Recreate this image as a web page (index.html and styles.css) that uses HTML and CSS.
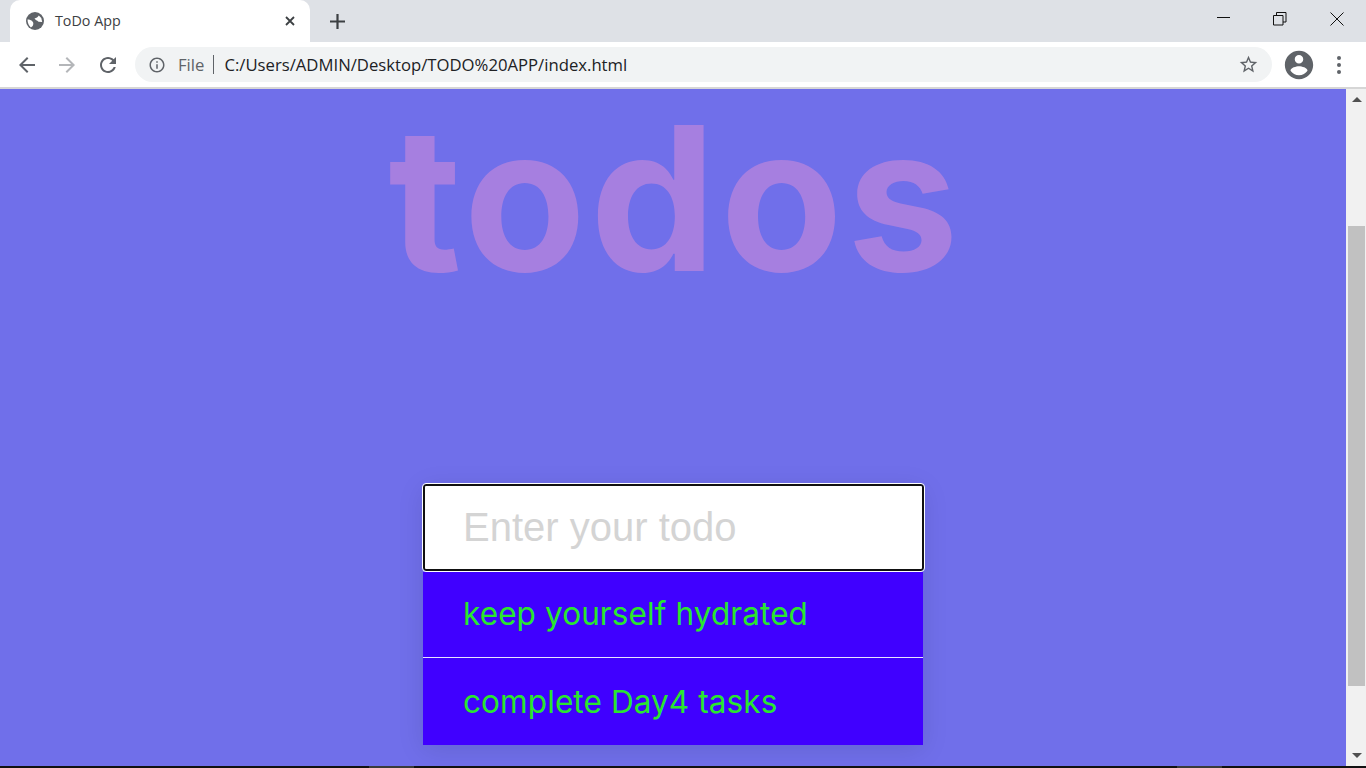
FILE: index.html
```html
<!DOCTYPE html>
<html>
  <head>
    <title>ToDo App</title>
    <meta name="viewport" content="width=device-width, initial-scale=1.0" />
    <link rel="stylesheet" href="styles.css">
  </head>
  <body>
    <div class="tabstrip">
      <div class="tab">
        <svg class="favicon" viewBox="0 0 18 18">
          <circle cx="9" cy="9" r="9" fill="#5f6368"/>
          <path fill="#fff" d="M1.500 7.500c2 0 3.800.6 5 2 1.200 1.300 1 3 .2 4.500l-1.800 1.500C3 14 1.500 11 1.500 7.500zM8.500 6.500c1.800-.3 3.500-1.500 4.300-3l2.500 2.500.9 4-3.700-.2c-1.500-1.500-3-1.800-4-3.300z"/>
        </svg>
        <span class="tab-title">ToDo App</span>
        <svg class="tab-close" viewBox="0 0 10 10"><path d="M1 1l8 8M9 1l-8 8"/></svg>
      </div>
      <svg class="new-tab" viewBox="0 0 15 15"><path d="M7.500 0v15M0 7.500h15"/></svg>
      <div class="window-controls">
        <svg viewBox="0 0 14 14"><path d="M0 5.500h13"/></svg>
        <svg class="restore" viewBox="0 0 14 14"><path d="M.5 3.500h9.500v9.500H.5zM3.500 3.500V.5h9.500v9.500H10"/></svg>
        <svg viewBox="0 0 14 14"><path d="M.5.5l13 13M13.500.5l-13 13"/></svg>
      </div>
    </div>

    <div class="toolbar">
      <svg class="nav-icon" viewBox="0 0 24 24"><path d="M20 11H7.830l5.590-5.590L12 4l-8 8 8 8 1.410-1.410L7.830 13H20v-2z"/></svg>
      <svg class="nav-icon forward" viewBox="0 0 24 24"><path d="M12 4l-1.410 1.410L16.170 11H4v2h12.170l-5.580 5.590L12 20l8-8z"/></svg>
      <svg class="nav-icon reload" viewBox="0 0 24 24"><path d="M17.650 6.350C16.200 4.900 14.210 4 12 4c-4.420 0-7.990 3.580-7.990 8s3.570 8 7.990 8c3.730 0 6.840-2.550 7.730-6h-2.080c-.82 2.330-3.040 4-5.650 4-3.310 0-6-2.690-6-6s2.690-6 6-6c1.660 0 3.140.69 4.220 1.780L13 11h7V4l-2.350 2.350z"/></svg>
      <div class="omnibox">
        <svg class="info-icon" viewBox="0 0 24 24"><path d="M11 7h2v2h-2zm0 4h2v6h-2zm1-9C6.480 2 2 6.480 2 12s4.480 10 10 10 10-4.480 10-10S17.520 2 12 2zm0 18c-4.410 0-8-3.590-8-8s3.590-8 8-8 8 3.590 8 8-3.590 8-8 8z"/></svg>
        <span class="scheme">File</span>
        <span class="divider"></span>
        <span class="url">C:/Users/ADMIN/Desktop/TODO%20APP/index.html</span>
        <svg class="star" viewBox="0 0 24 24"><path d="M22 9.240l-7.190-.620L12 2 9.190 8.630 2 9.240l5.460 4.730L5.820 21 12 17.270 18.180 21l-1.630-7.030L22 9.240zM12 15.400l-3.760 2.270 1-4.280-3.320-2.880 4.380-.380L12 6.100l1.710 4.040 4.380.380-3.320 2.880 1 4.280L12 15.400z"/></svg>
      </div>
      <svg class="avatar" viewBox="0 0 24 24"><path d="M12 2C6.480 2 2 6.480 2 12s4.480 10 10 10 10-4.480 10-10S17.520 2 12 2zm0 3c1.660 0 3 1.340 3 3s-1.340 3-3 3-3-1.340-3-3 1.340-3 3-3zm0 14.200c-2.500 0-4.710-1.280-6-3.220.030-1.990 4-3.080 6-3.080 1.990 0 5.970 1.090 6 3.080-1.290 1.940-3.500 3.220-6 3.220z"/></svg>
      <div class="kebab"><i></i><i></i><i></i></div>
    </div>

    <div class="viewport">
      <main class="page">
        <h1 class="title">todos</h1>
        <div class="todo-box">
          <input class="todo-input" type="text" placeholder="Enter your todo" />
          <ul class="todo-list">
            <li class="todo-item">keep yourself hydrated</li>
            <li class="todo-item">complete Day4 tasks</li>
          </ul>
        </div>
      </main>
      <div class="scrollbar">
        <span class="arrow up"></span>
        <div class="track"><div class="thumb"></div></div>
        <span class="arrow down"></span>
      </div>
    </div>

    <div class="taskbar"><span class="task-a"></span><span class="task-b"></span></div>
  </body>
</html>
```

FILE: styles.css
```css
* {
  box-sizing: border-box;
}
html,
body {
  margin: 0;
  height: 100%;
  overflow: hidden;
}
body {
  display: flex;
  flex-direction: column;
  font-family: "Open Sans", sans-serif;
  background-color: #fff;
}

/* browser chrome */
.tabstrip {
  height: 42px;
  flex: none;
  display: flex;
  align-items: flex-end;
  padding-left: 10px;
  background-color: #dee1e6;
}
.tab {
  width: 300px;
  height: 42px;
  display: flex;
  align-items: center;
  padding: 0 15px 0 16px;
  background-color: #fff;
  border-radius: 10px 10px 0 0;
}
.favicon {
  width: 18px;
  height: 18px;
}
.tab-title {
  flex: 1;
  margin: 0 0 2px 11px;
  font-size: 14.3px;
  color: #3c4043;
}
.tab-close {
  width: 10px;
  height: 10px;
  fill: none;
  stroke: #3c4043;
  stroke-width: 1.8;
}
.new-tab {
  width: 15px;
  height: 15px;
  margin: 0 0 13px 20px;
  fill: none;
  stroke: #3c4043;
  stroke-width: 2.2;
}
.window-controls {
  margin-left: auto;
  align-self: flex-start;
  display: flex;
  gap: 42px;
  padding: 12px 22px 0 0;
}
.window-controls svg {
  width: 14px;
  height: 14px;
  fill: none;
  stroke: #111;
  stroke-width: 1;
}
.window-controls .restore {
  margin-right: 1px;
}

.toolbar {
  height: 47px;
  flex: none;
  display: flex;
  align-items: center;
  padding: 0 17px 0 15px;
  background-color: #fff;
  border-bottom: 2px solid #d6d6d6;
}
.nav-icon {
  width: 24px;
  height: 24px;
  margin-right: 16px;
  fill: #5f6368;
}
.nav-icon.forward {
  margin-right: 17px;
  fill: #b4b6b9;
}
.nav-icon.reload {
  margin-right: 15px;
}
.omnibox {
  width: 1137px;
  height: 35px;
  display: flex;
  align-items: center;
  padding: 0 13px;
  background-color: #f1f3f4;
  border-radius: 18px;
}
.info-icon {
  width: 18px;
  height: 18px;
  fill: #5f6368;
}
.scheme {
  margin-left: 12px;
  font-size: 16.7px;
  color: #5f6368;
}
.divider {
  width: 1px;
  height: 19px;
  margin: 0 10px 0 9px;
  background-color: #5f6368;
}
.url {
  flex: 1;
  font-size: 16.7px;
  color: #202124;
}
.star {
  width: 21px;
  height: 21px;
  fill: #5f6368;
}
.avatar {
  width: 34px;
  height: 34px;
  margin-left: 10px;
  fill: #5f6368;
}
.kebab {
  display: flex;
  flex-direction: column;
  gap: 3px;
  margin-left: 21px;
}
.kebab i {
  width: 4px;
  height: 4px;
  border-radius: 50%;
  background-color: #5f6368;
}

/* page */
.viewport {
  flex: 1;
  min-height: 0;
  display: flex;
}
.page {
  flex: 1;
  display: flex;
  flex-direction: column;
  align-items: center;
  background-color: #706fea;
}
.title {
  height: 395px;
  margin: 0 0 0 5px;
  font-family: Inter, sans-serif;
  font-size: 200px;
  font-weight: 650;
  letter-spacing: 4px;
  line-height: 218px;
  color: #a67fe0;
}
.todo-box {
  width: 500px;
  box-shadow: 0 5px 25px rgba(0, 0, 0, 0.1);
}
.todo-input {
  display: block;
  width: 501px;
  height: 87px;
  padding: 0 38px;
  border: 2px solid #111;
  border-radius: 3px;
  outline: 1px solid #fff;
  font-family: "Liberation Sans", sans-serif;
  font-size: 40px;
  background-color: #fff;
}
.todo-input::placeholder {
  color: #d4d4d4;
}
.todo-list {
  margin: 1px 0 0;
  padding: 0;
  list-style: none;
}
.todo-item {
  height: 86px;
  display: flex;
  align-items: center;
  padding: 0 40px 2px;
  font-family: Inter, sans-serif;
  font-size: 31.5px;
  letter-spacing: 0.1px;
  color: #2ae62e;
  background-color: #4000ff;
  border-bottom: 1px solid #e8e4ff;
}
.todo-item:last-child {
  height: 87px;
  padding-bottom: 0;
  border-bottom: 0;
}

/* scrollbar */
.scrollbar {
  width: 20px;
  flex: none;
  display: flex;
  flex-direction: column;
  align-items: center;
  background-color: #f1f1f1;
  padding: 0 1px 0 2px;
}
.arrow {
  flex: none;
  width: 0;
  height: 0;
  margin: 8px 0;
  border-left: 5px solid transparent;
  border-right: 5px solid transparent;
}
.arrow.up {
  border-bottom: 5px solid #505050;
}
.arrow.down {
  border-top: 5px solid #505050;
}
.track {
  flex: 1;
  width: 100%;
  padding-top: 116px;
}
.thumb {
  height: 460px;
  background-color: #c1c1c1;
}

.taskbar {
  height: 2px;
  flex: none;
  display: flex;
  padding-left: 369px;
  background-color: #111;
}
.task-a,
.task-b {
  width: 45px;
  background-color: #3a3a3a;
}
.task-b {
  margin-left: 763px;
}
```
